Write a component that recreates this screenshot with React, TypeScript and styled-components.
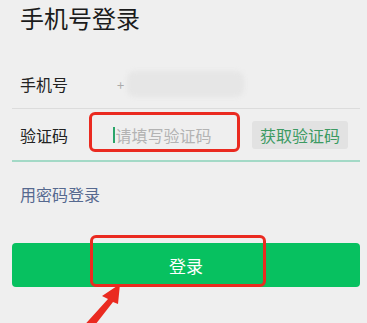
import React from "react";
import styled, { createGlobalStyle } from "styled-components";

const Global = createGlobalStyle`
  html, body { margin: 0; padding: 0; background: #efefef; }
  body { font-family: "Noto Sans CJK SC", "Noto Sans", sans-serif; overflow: hidden; }
`;

const Page = styled.div`
  position: relative;
  width: 367px;
  height: 323px;
  padding: 0 7px 0 12px;
  box-sizing: border-box;
  display: flex;
  flex-direction: column;
`;

const Title = styled.h1`
  margin: 0;
  padding-left: 8px;
  font-size: 24px;
  font-weight: 400;
  line-height: normal;
  color: #1b1b1b;
`;

const Spacer = styled.div`
  height: 25px;
  flex: none;
`;

const Row = styled.div<{ $h: number; $line: string; $lw: number }>`
  position: relative;
  display: flex;
  align-items: center;
  height: ${(p) => p.$h}px;
  border-bottom: ${(p) => p.$lw}px solid ${(p) => p.$line};
  padding-left: 8px;
`;

const Label = styled.div`
  width: 93px;
  flex: none;
  font-size: 16px;
  color: #222;
  line-height: 20px;
`;

const Plus = styled.span`
  font-size: 13px;
  color: #aaa;
  margin-left: 4px;
  margin-right: 3px;
`;

const Blurred = styled.div`
  width: 117px;
  height: 26px;
  border-radius: 8px;
  background: #e6e6e6;
  filter: blur(2px);
`;

const CodeInput = styled.div`
  flex: 1;
  display: flex;
  align-items: center;
  font-size: 16px;
  color: #b3b3b3;
  line-height: 20px;
`;

const Caret = styled.span`
  width: 1.5px;
  height: 16px;
  background: #2aa56a;
  margin-right: 1px;
`;

const CodeButton = styled.div`
  flex: none;
  margin-right: 12px;
  width: 96px;
  height: 28px;
  display: flex;
  align-items: center;
  justify-content: center;
  background: #e2e2e2;
  border-radius: 3px;
  font-size: 16px;
  color: #3c9a62;
`;

const Link = styled.div`
  margin-top: 22px;
  padding-left: 8px;
  font-size: 16px;
  line-height: 20px;
  color: #56698f;
`;

const LoginButton = styled.div`
  position: relative;
  margin-top: 39px;
  height: 44px;
  background: #07c160;
  border-radius: 4px;
  display: flex;
  align-items: center;
  justify-content: center;
  font-size: 17px;
  color: #fff;
`;

const RedBox = styled.div<{ $l: number; $t: number; $w: number; $h: number }>`
  position: absolute;
  left: ${(p) => p.$l}px;
  top: ${(p) => p.$t}px;
  width: ${(p) => p.$w}px;
  height: ${(p) => p.$h}px;
  box-sizing: border-box;
  border: 3px solid #ea2a20;
  border-radius: 6px;
`;

const Arrow = styled.svg`
  position: absolute;
  left: 0;
  top: 0;
  pointer-events: none;
`;

export default function App() {
  return (
    <>
      <Global />
      <Page>
        <Title>手机号登录</Title>
        <Spacer />
        <Row $h={48} $line="#dcdcdc" $lw={1}>
          <Label>手机号</Label>
          <Plus>+</Plus>
          <Blurred />
        </Row>
        <Row $h={51} $line="#a3d9c6" $lw={2}>
          <Label>验证码</Label>
          <CodeInput>
            <Caret />
            请填写验证码
          </CodeInput>
          <CodeButton>获取验证码</CodeButton>
          <RedBox $l={77} $t={3} $w={151} $h={40} />
        </Row>
        <Link>用密码登录</Link>
        <LoginButton>
          登录
          <RedBox $l={78} $t={-8} $w={176} $h={52} />
        </LoginButton>
        <Arrow width="367" height="323" viewBox="0 0 367 323">
          <polygon points="120,284 102,296 108,299 80,330 88,334 113,302 118,304" fill="#ea2a20" />
        </Arrow>
      </Page>
    </>
  );
}
